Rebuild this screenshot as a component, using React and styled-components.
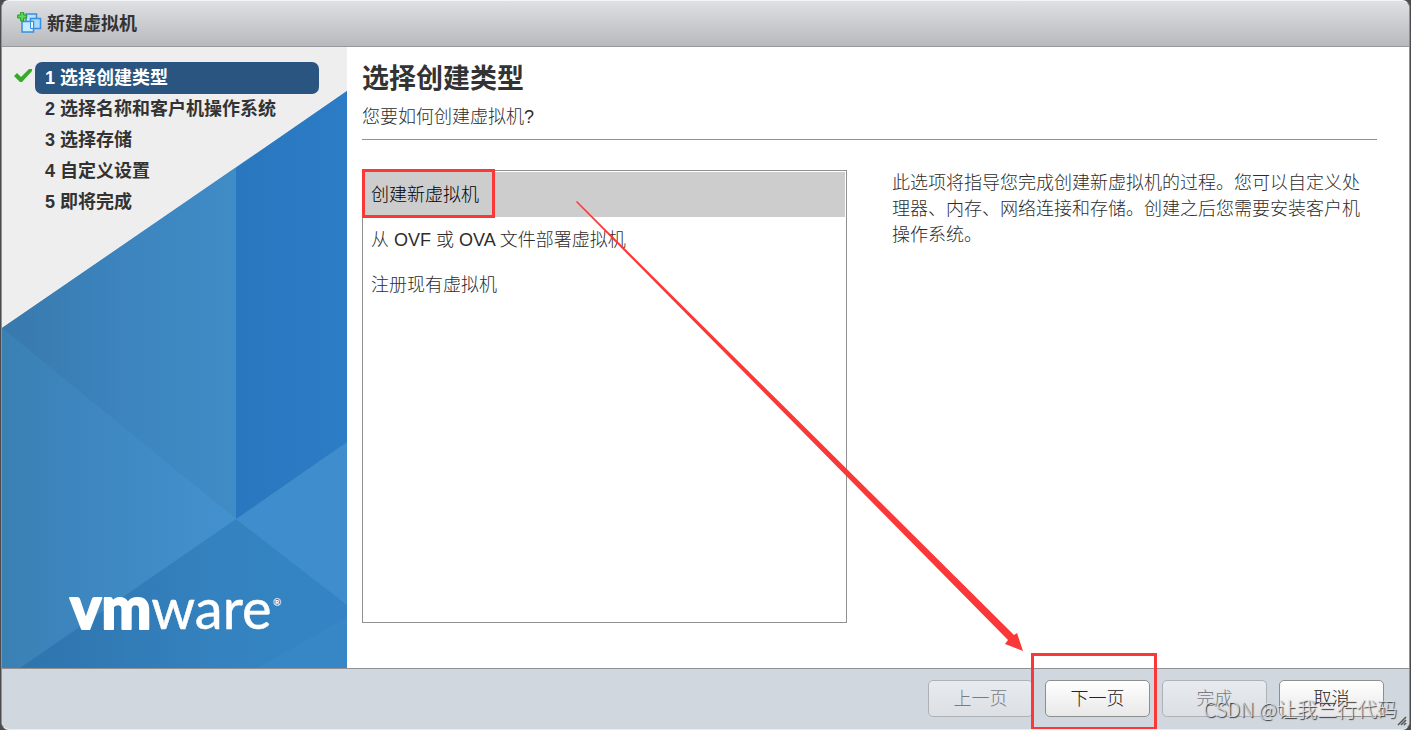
import React, { useState } from 'react';
import styled, { createGlobalStyle } from 'styled-components';

const GlobalStyle = createGlobalStyle`
  * {
    box-sizing: border-box;
  }

  body {
    margin: 0;
    background: #4c4c4e;
    color: #2c2c2c;
    font-family: "Liberation Sans", "Noto Sans CJK SC", sans-serif;
    font-size: 18px;
    font-weight: 300;
  }
`;

const ACCENT = '#fb3838';

const Dialog = styled.div`
  position: relative;
  display: flex;
  flex-direction: column;
  min-height: 100vh;
  margin: 0 1px;
  border: 1px solid;
  border-color: #f4f4f4 #909090 #e8ebef;
  border-radius: 8px;
  overflow: hidden;
  background: #fff;
`;

const Header = styled.header`
  display: flex;
  align-items: center;
  gap: 5px;
  height: 46px;
  padding: 0 15px;
  border-bottom: 1px solid #999;
  background: linear-gradient(#dfe0e3, #b8b9bc);
`;

const Title = styled.h1`
  margin: 0;
  color: #333;
  font-size: 18px;
  line-height: 24px;
`;

const Body = styled.div`
  display: flex;
  flex: 1;
`;

const Sidebar = styled.nav`
  position: relative;
  flex: 0 0 345px;
  background: #eee;
`;

const Artwork = styled.svg`
  position: absolute;
  inset: 0;
  width: 100%;
  height: 100%;
`;

const Steps = styled.ol`
  position: relative;
  list-style: none;
  margin: 0;
  padding: 15px 28px 0 12px;
`;

const Step = styled.li`
  display: grid;
  grid-template-columns: 21px 1fr;
  align-items: center;
`;

const StepLink = styled.a`
  grid-column: 2;
  padding: 0 10px;
  border-radius: 7px;
  background: ${(props) => (props.$active ? '#2a5580' : 'transparent')};
  color: ${(props) => (props.$active ? '#fff' : '#333')};
  font-weight: bold;
  line-height: ${(props) => (props.$active ? '32px' : '31px')};
  text-decoration: none;
`;

const Content = styled.main`
  display: flex;
  flex: 1;
  flex-direction: column;
  padding: 12px 32px 45px 15px;
`;

const Heading = styled.h2`
  margin: 0;
  color: #333;
  font-size: 27px;
  line-height: 40px;
`;

const Subtitle = styled.p`
  margin: 0;
  padding: 5px 0 8px;
  border-bottom: 1px solid #919191;
  line-height: 27px;
`;

const Columns = styled.div`
  display: grid;
  grid-template-columns: 1fr 1fr;
  gap: 45px;
  flex: 1;
  margin-top: 30px;
`;

const Options = styled.ul`
  list-style: none;
  margin: 0;
  padding: 1px;
  border: 1px solid #919191;
`;

const Option = styled.button`
  display: block;
  width: 100%;
  height: 45px;
  padding: 0 7px 4px;
  border: 0;
  background: ${(props) => (props.$selected ? '#cdcdcd' : '#fff')};
  color: ${(props) => (props.$selected ? '#000' : '#2c2c2c')};
  font: inherit;
  text-align: left;
`;

const Description = styled.p`
  margin: 0;
  padding-right: 15px;
  line-height: 26px;
`;

const Footer = styled.footer`
  display: flex;
  justify-content: flex-end;
  gap: 12px;
  padding: 11px 25px 12px;
  border-top: 1px solid #919191;
  background: #d0d7df;
`;

const Button = styled.button`
  width: 105px;
  height: 37px;
  padding: 0 0 4px;
  border: 1px solid #8e8e8e;
  border-radius: 5px;
  background: linear-gradient(#fff, #e8e8e8);
  color: #222;
  font: inherit;

  &:disabled {
    opacity: 0.5;
  }
`;

const Marked = styled.span`
  position: relative;

  &::after {
    content: '';
    position: absolute;
    inset: ${(props) => props.$inset};
    border: 3px solid ${ACCENT};
    pointer-events: none;
  }
`;

const Arrow = styled.svg`
  position: absolute;
  left: 574px;
  top: 200px;
  width: 450px;
  height: 452px;
  pointer-events: none;
`;

const Watermark = styled.span`
  position: absolute;
  right: 12px;
  bottom: 7px;
  color: rgba(225, 228, 232, 0.85);
  font-family: "Noto Sans CJK SC", sans-serif;
  font-size: 20px;
  line-height: 26px;
  text-shadow: 1px 1px 1px #333;
  pointer-events: none;
`;

const Grip = styled.svg`
  position: absolute;
  right: 2px;
  bottom: 3px;
`;

const Check = styled.svg`
  margin-bottom: 5px;
`;

const NewVmIcon = () => (
  <svg width="25" height="24" viewBox="0 0 25 24" aria-hidden="true">
    <g stroke="#3a8ee0" strokeWidth="1.5">
      <rect x="9" y="2" width="10.500" height="10" fill="#b9e2fb" />
      <rect x="13.500" y="6.500" width="10" height="10" fill="#a5dafb" />
      <rect x="5" y="9.500" width="11.500" height="10.500" fill="#c4ecff" />
      <path d="M13.500 9.500h3v7h-3z" fill="#e4f6ff" strokeWidth="1" />
    </g>
    <path d="M3.700 0h3v3h3v3h-3v3h-3V6h-3V3h3z" fill="#63d552" stroke="#1d9a27" />
  </svg>
);

const CheckIcon = () => (
  <Check width="21" height="16" viewBox="0 0 21 16" aria-hidden="true">
    <path d="M0 8l3-3 4 4 8-8 3 0 0 2L8 14H6z" fill="#35ab27" />
  </Check>
);

const SidebarArtwork = () => (
  <Artwork viewBox="0 0 345 621" preserveAspectRatio="none" aria-hidden="true">
    <defs>
      <linearGradient id="upper">
        <stop offset="0" stopColor="#3879ac" />
        <stop offset="0.5" stopColor="#3c84be" />
        <stop offset="1" stopColor="#408cc7" />
      </linearGradient>
      <linearGradient id="left">
        <stop offset="0" stopColor="#3a80b3" />
        <stop offset="0.4" stopColor="#3e87c1" />
        <stop offset="1" stopColor="#4392cf" />
      </linearGradient>
      <linearGradient id="bottom">
        <stop offset="0" stopColor="#2f74ad" />
        <stop offset="0.65" stopColor="#3483c0" />
        <stop offset="1" stopColor="#3583c5" />
      </linearGradient>
      <linearGradient id="deep">
        <stop offset="0" stopColor="#2977be" />
        <stop offset="1" stopColor="#2c7cc6" />
      </linearGradient>
    </defs>
    <path d="M0 281L345 44V621H0z" fill="#3a85c2" />
    <path d="M0 281L234 121H236V474H234L0 315z" fill="url(#upper)" />
    <path d="M234 121L345 44V400L234 476z" fill="url(#deep)" />
    <path d="M0 281V621H22L240 472H234z" fill="url(#left)" />
    <path d="M18 621L234 472H240L345 545V621z" fill="url(#bottom)" />
    <path d="M234 472L345 395V558z" fill="#3f8dcd" />
    <path d="M255 621L345 570V621z" fill="#3787c6" />
    <g fill="#fff" stroke="#fff" strokeLinejoin="round" fontFamily="Lato, sans-serif">
      <text x="68" y="582" fontSize="56">
        <tspan fontWeight="900" fontSize="59" strokeWidth="2">vm</tspan>
        <tspan fontWeight="400" strokeWidth="0.5">ware</tspan>
      </text>
      <text x="271" y="559" fontSize="10" fontWeight="700" stroke="none">®</text>
    </g>
  </Artwork>
);

const STEPS = [
  '选择创建类型',
  '选择名称和客户机操作系统',
  '选择存储',
  '自定义设置',
  '即将完成',
];

const OPTIONS = [
  '创建新虚拟机',
  '从 OVF 或 OVA 文件部署虚拟机',
  '注册现有虚拟机',
];

const App = () => {
  const [selected, setSelected] = useState(0);

  return (
    <>
      <GlobalStyle />
      <Dialog>
        <Header>
          <NewVmIcon />
          <Title>新建虚拟机</Title>
        </Header>
        <Body>
          <Sidebar>
            <SidebarArtwork />
            <Steps>
              {STEPS.map((step, index) => (
                <Step key={step}>
                  {index === 0 && <CheckIcon />}
                  <StepLink href="#" $active={index === 0}>
                    {`${index + 1} ${step}`}
                  </StepLink>
                </Step>
              ))}
            </Steps>
          </Sidebar>
          <Content>
            <Heading>选择创建类型</Heading>
            <Subtitle>您要如何创建虚拟机?</Subtitle>
            <Columns>
              <Options>
                {OPTIONS.map((option, index) => (
                  <li key={option}>
                    <Option
                      type="button"
                      $selected={index === selected}
                      onClick={() => setSelected(index)}
                    >
                      {index === 0 ? <Marked $inset="-16px -16px -13px -9px">{option}</Marked> : option}
                    </Option>
                  </li>
                ))}
              </Options>
              <Description>
                此选项将指导您完成创建新虚拟机的过程。您可以自定义处理器、内存、网络连接和存储。创建之后您需要安装客户机操作系统。
              </Description>
            </Columns>
          </Content>
        </Body>
        <Footer>
          <Button type="button" disabled>上一页</Button>
          <Marked $inset="-27px -7px -13px -14px">
            <Button type="button">下一页</Button>
          </Marked>
          <Button type="button" disabled>完成</Button>
          <Button type="button">取消</Button>
        </Footer>
        <Arrow viewBox="0 0 450 452" aria-hidden="true">
          <path d="M0 1L1 0L438 434L441 432L447 450L429 443L432 439z" fill={ACCENT} />
        </Arrow>
        <Watermark>CSDN @让我三行代码</Watermark>
        <Grip width="10" height="10" viewBox="0 0 10 10" aria-hidden="true">
          <path d="M1 9L9 1M4 9L9 4M7 9L9 7" stroke="#555" strokeWidth="1.500" />
        </Grip>
      </Dialog>
    </>
  );
};

export default App;
